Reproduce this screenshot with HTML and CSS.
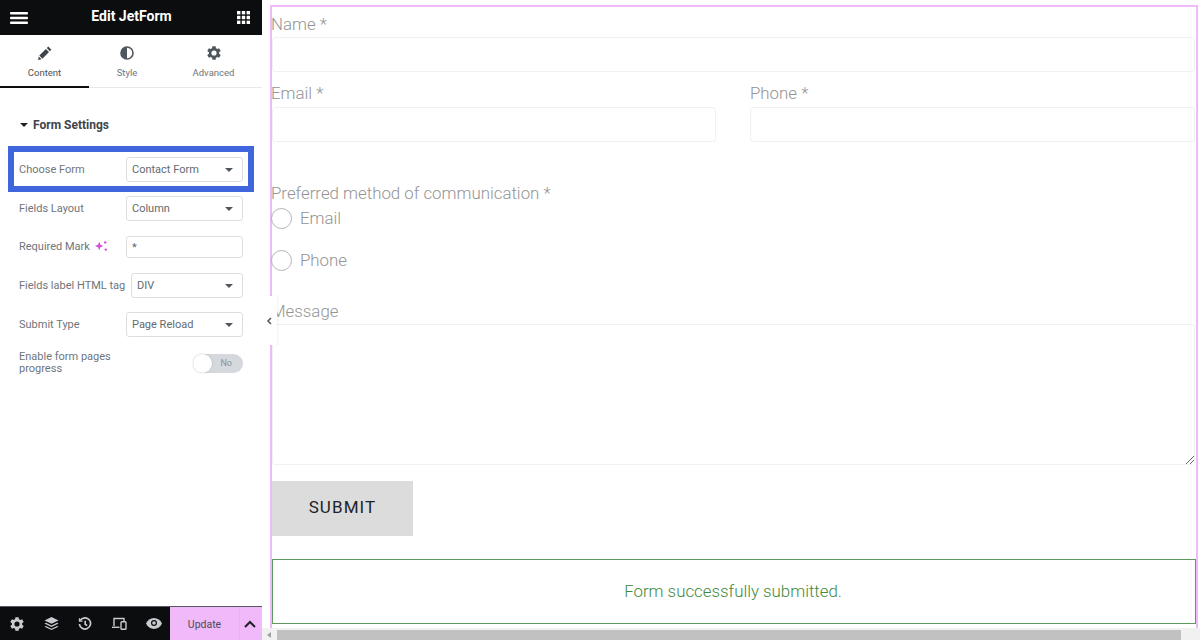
FILE: index.html
```html
<!DOCTYPE html>
<html lang="en">
<head>
    <meta charset="UTF-8" />
    <title>Edit JetForm</title>
    <link rel="stylesheet" href="styles.css">
</head>
<body>
<div class="panel">
    <div class="panel-header">
        <svg class="icon-menu" width="18" height="12" viewBox="0 0 18 12"><path d="M1 0h16a1 1 0 0 1 0 2.400H1A1 1 0 0 1 1 0zM1 4.800h16a1 1 0 0 1 0 2.400H1a1 1 0 0 1 0-2.400zM1 9.600h16a1 1 0 0 1 0 2.400H1a1 1 0 0 1 0-2.400z" fill="#fff"/></svg>
        <div class="panel-title">Edit JetForm</div>
        <svg class="icon-grid" width="13" height="13" viewBox="0 0 13 13" fill="#fff"><rect width="3.400" height="3.400"/><rect x="4.800" width="3.400" height="3.400"/><rect x="9.600" width="3.400" height="3.400"/><rect y="4.800" width="3.400" height="3.400"/><rect x="4.800" y="4.800" width="3.400" height="3.400"/><rect x="9.600" y="4.800" width="3.400" height="3.400"/><rect y="9.600" width="3.400" height="3.400"/><rect x="4.800" y="9.600" width="3.400" height="3.400"/><rect x="9.600" y="9.600" width="3.400" height="3.400"/></svg>
    </div>

    <div class="tabs">
        <div class="tab tab-content active">
            <svg width="14" height="14" viewBox="0 0 14 14"><path d="M10.300.6l3.100 3.100-1.500 1.500-3.100-3.100zM7.900 3l3.100 3.100-6.600 6.600-3.100-3.100zM.8 10.400l2.800 2.800-3.500.8z" fill="#3f444b"/></svg>
            <span>Content</span>
        </div>
        <div class="tab tab-style">
            <svg width="14" height="14" viewBox="0 0 14 14"><circle cx="7" cy="7" r="6" fill="#fff" stroke="#4f565d" stroke-width="1.600"/><path d="M7 1a6 6 0 0 0 0 12z" fill="#4f565d"/></svg>
            <span>Style</span>
        </div>
        <div class="tab tab-advanced">
            <svg width="14" height="14" viewBox="3 2.500 19 19"><path d="M19.400 13a7.600 7.600 0 0 0 0-2l2.200-1.700-2.200-3.800-2.600 1a7.500 7.500 0 0 0-1.700-1L14.700 2.800h-4.400l-.4 2.700a7.500 7.500 0 0 0-1.700 1l-2.600-1-2.200 3.800L5.600 11a7.600 7.600 0 0 0 0 2l-2.200 1.700 2.200 3.800 2.600-1a7.500 7.500 0 0 0 1.700 1l.4 2.700h4.400l.4-2.700a7.500 7.500 0 0 0 1.700-1l2.600 1 2.200-3.800zM12.500 15.500a3.500 3.500 0 1 1 0-7 3.500 3.500 0 0 1 0 7z" fill="#4f565d"/></svg>
            <span>Advanced</span>
        </div>
    </div>

    <div class="section-title"><span class="caret caret-dark"></span>Form Settings</div>

    <div class="highlight">
        <div class="row row-first">
            <label>Choose Form</label>
            <div class="select">Contact Form<span class="caret"></span></div>
        </div>
    </div>

    <div class="row row-layout">
        <label>Fields Layout</label>
        <div class="select">Column<span class="caret"></span></div>
    </div>
    <div class="row row-mark">
        <label>Required Mark
            <svg class="icon-spark" width="12" height="12" viewBox="1 1.500 10 9" fill="#d04fd6"><path d="M4.500 2.500l1 2.500 2.500 1-2.500 1-1 2.500-1-2.500-2.500-1 2.500-1z"/><circle cx="9.500" cy="3" r="1"/><circle cx="10" cy="9" r="1"/></svg>
        </label>
        <div class="select select-text">*</div>
    </div>
    <div class="row row-tag">
        <label>Fields label HTML tag</label>
        <div class="select select-wide">DIV<span class="caret"></span></div>
    </div>
    <div class="row row-submit">
        <label>Submit Type</label>
        <div class="select">Page Reload<span class="caret"></span></div>
    </div>
    <div class="row row-toggle">
        <label class="label-wrap">Enable form pages progress</label>
        <div class="toggle"><span class="knob"></span><span class="toggle-no">No</span></div>
    </div>

    <div class="panel-footer">
        <div class="footer-icons">
            <svg width="14" height="14" viewBox="3 2.500 19 19"><path d="M19.400 13a7.600 7.600 0 0 0 0-2l2.200-1.700-2.200-3.800-2.600 1a7.500 7.500 0 0 0-1.700-1L14.700 2.800h-4.400l-.4 2.700a7.500 7.500 0 0 0-1.700 1l-2.600-1-2.200 3.800L5.600 11a7.600 7.600 0 0 0 0 2l-2.200 1.700 2.200 3.800 2.600-1a7.500 7.500 0 0 0 1.700 1l.4 2.700h4.400l.4-2.700a7.500 7.500 0 0 0 1.700-1l2.600 1 2.200-3.800zM12.500 15.500a3.500 3.500 0 1 1 0-7 3.500 3.500 0 0 1 0 7z" fill="#c8ccd0"/></svg>
            <svg width="15" height="14" viewBox="0 0 15 14" fill="#c8ccd0"><path d="M7.500 0l7 3.400-7 3.400-7-3.400z"/><path d="M1.900 5.800l5.600 2.700 5.600-2.700 1.400.7-7 3.400-7-3.400z"/><path d="M1.900 9l5.600 2.700L13.100 9l1.400.7-7 3.400-7-3.400z"/></svg>
            <svg width="14" height="14" viewBox="0 0 14 14" fill="none" stroke="#c8ccd0" stroke-width="1.700"><path d="M2.200 3.500A5.600 5.600 0 1 1 1.400 7"/><path d="M1.500 1.200v3h3" stroke-width="1.300"/><path d="M7.200 3.800v3.500l2 1.300"/></svg>
            <svg width="15" height="13" viewBox="0 0 15 13" fill="none" stroke="#c8ccd0" stroke-width="1.400"><path d="M2 9V1.500h10V4"/><path d="M0 10.300h7.500"/><rect x="9" y="4.700" width="5" height="7.600" rx=".8"/></svg>
            <svg width="16" height="11" viewBox="0 0 16 11"><path d="M8 0c3.500 0 6.500 2.200 8 5.500C14.500 8.800 11.500 11 8 11S1.500 8.800 0 5.500C1.500 2.200 4.500 0 8 0z" fill="#c8ccd0"/><circle cx="8" cy="5" r="3" fill="#0c0d0e"/><circle cx="8" cy="5" r="1.800" fill="#c8ccd0"/></svg>
        </div>
        <div class="update">Update</div>
        <div class="update-more">
            <svg width="12" height="8" viewBox="0 0 12 8" fill="none" stroke="#1f2327" stroke-width="2"><path d="M1 7l5-5 5 5"/></svg>
        </div>
    </div>
</div>

<div class="collapse-handle">
    <svg width="6" height="8" viewBox="0 0 6 8" fill="none" stroke="#4f565d" stroke-width="1.500"><path d="M5 1L2 4l3 3"/></svg>
</div>

<div class="preview">
    <div class="frame">
        <div class="field-label label-name">Name *</div>
        <div class="input input-name"></div>

        <div class="two-cols">
            <div class="col col-left">
                <div class="field-label label-email">Email *</div>
                <div class="input"></div>
            </div>
            <div class="col col-right">
                <div class="field-label label-email">Phone *</div>
                <div class="input"></div>
            </div>
        </div>

        <div class="field-label label-method">Preferred method of communication *</div>
        <div class="radio"><span class="circle"></span>Email</div>
        <div class="radio radio-last"><span class="circle"></span>Phone</div>

        <div class="field-label label-message">Message</div>
        <div class="textarea">
            <svg class="resizer" width="9" height="9" viewBox="0 0 9 9" stroke="#666" stroke-width="1"><path d="M1 9l8-8M5 9l4-4"/></svg>
        </div>

        <div class="submit">SUBMIT</div>
        <div class="success">Form successfully submitted.</div>
    </div>
    <div class="scrollbar">
        <span class="arrow"></span>
        <div class="thumb"></div>
    </div>
</div>
</body>
</html>
```

FILE: styles.css
```css
/* Global Reset */
* {
    box-sizing: border-box;
    margin: 0;
    padding: 0;
}

body {
    width: 1200px;
    height: 640px;
    display: flex;
    font-family: "Roboto", "Liberation Sans", sans-serif;
    background: #fff;
    overflow: hidden;
    position: relative;
}

/* Left panel */
.panel {
    width: 262px;
    height: 640px;
    display: flex;
    flex-direction: column;
    background: #fff;
    flex-shrink: 0;
}

.panel-header {
    height: 35px;
    background: #0c0d0e;
    display: flex;
    align-items: center;
    justify-content: space-between;
    padding: 0 12px 0 10px;
    flex-shrink: 0;
}

.panel-title {
    color: #fff;
    font-size: 14px;
    font-weight: 700;
    margin: -3px 2px 0 0;
}

.tabs {
    height: 53px;
    display: flex;
    border-bottom: 1px solid #e6e8ea;
    flex-shrink: 0;
}

.tab {
    display: flex;
    flex-direction: column;
    align-items: center;
    padding-top: 11px;
    gap: 7px;
    font-size: 9.5px;
    color: #6f757b;
    height: 53px;
}

.tab-content {
    width: 89px;
}

.tab-style {
    width: 76px;
}

.tab-advanced {
    width: 97px;
}

.tab.active {
    color: #4b5258;
    border-bottom: 2px solid #0c0d0e;
}

.section-title {
    margin-top: 29px;
    margin-left: 20px;
    height: 16px;
    line-height: 16px;
    font-size: 12px;
    font-weight: 700;
    color: #3f444b;
    display: flex;
    align-items: center;
}

.caret {
    width: 0;
    height: 0;
    border-left: 4px solid transparent;
    border-right: 4px solid transparent;
    border-top: 4px solid #4f565d;
    margin-left: auto;
}

.caret-dark {
    border-top-color: #1f2327;
    margin-left: 0;
    margin-right: 5px;
}

.highlight {
    margin: 13px 8px 0;
    height: 46px;
    border: 6px solid #3f66dc;
    padding: 5px 5px 0;
}

.row {
    display: flex;
    align-items: center;
    justify-content: space-between;
    margin: 0 19px;
    font-size: 11px;
    color: #6f757b;
    height: 25px;
    flex-shrink: 0;
}

.row label {
    white-space: nowrap;
    display: flex;
    align-items: center;
    gap: 5px;
}

.row-first {
    margin: 0;
}

.row-layout {
    margin-top: 4px;
}

.row-mark {
    margin-top: 15px;
    height: 22px;
}

.row-mark label {
    margin-top: -2px;
}

.row-tag {
    margin-top: 15px;
}

.row-submit {
    margin-top: 14px;
}

.row-toggle {
    margin-top: 14px;
    height: 24px;
}

.row label.label-wrap {
    white-space: normal;
    width: 110px;
    line-height: 12px;
}

.select {
    width: 117px;
    height: 100%;
    border: 1px solid #dcdfe2;
    border-radius: 3px;
    display: flex;
    align-items: center;
    padding: 0 9px 0 5px;
    color: #636a70;
    background: #fff;
}

.select-wide {
    width: 112px;
}

.toggle {
    width: 50px;
    height: 19px;
    border-radius: 10px;
    background: #d5d8dc;
    position: relative;
    display: flex;
    align-items: center;
    justify-content: flex-end;
    padding-right: 11px;
}

.knob {
    position: absolute;
    left: 0;
    top: 0;
    width: 19px;
    height: 19px;
    border-radius: 50%;
    background: #fff;
    box-shadow: 0 0 2px rgba(0,0,0,0.2);
}

.toggle-no {
    font-size: 9px;
    color: #8b9299;
}

.panel-footer {
    margin-top: auto;
    height: 34px;
    display: flex;
    background: #0c0d0e;
    border-top: 1px solid #55595e;
}

.footer-icons {
    width: 170px;
    display: flex;
    align-items: center;
    justify-content: space-between;
    padding: 0 8px 0 10px;
}

.update {
    width: 69px;
    background: #f0b9f9;
    display: flex;
    align-items: center;
    justify-content: center;
    padding-top: 2px;
    font-size: 10.5px;
    color: #4d4a58;
}

.update-more {
    width: 23px;
    background: #f0b9f9;
    border-left: 1px solid #ebb0f3;
    display: flex;
    align-items: center;
    justify-content: center;
    padding-right: 3px;
}

/* Collapse handle over the preview */
.collapse-handle {
    position: absolute;
    left: 262px;
    top: 296px;
    width: 15px;
    height: 49px;
    background: #fff;
    box-shadow: 1px 0 2px rgba(0,0,0,0.06);
    display: flex;
    align-items: center;
    justify-content: center;
    padding-right: 2px;
    z-index: 2;
}

/* Preview */
.preview {
    flex: 1;
    display: flex;
    flex-direction: column;
    height: 640px;
    padding-left: 8px;
    padding-top: 5px;
    padding-right: 2px;
    background: #fff;
}

.frame {
    height: 623px;
    border: 2px solid #f0b9f9;
    border-bottom: none;
    padding-right: 1px;
    display: flex;
    flex-direction: column;
    flex-shrink: 0;
}

.field-label {
    font-size: 16.85px;
    font-weight: 300;
    line-height: 20px;
    color: #949494;
    margin-left: -1px;
}

.label-name {
    margin-top: 7px;
    margin-bottom: 3px;
}

.label-email {
    margin-top: 11px;
    margin-bottom: 4px;
}

.label-method {
    margin-top: 41px;
}

.label-message {
    margin-top: 26px;
    margin-bottom: 3px;
}

.input {
    height: 35px;
    border: 1px solid #f1f1f1;
    border-radius: 3px;
}

.input-name {
    height: 35px;
}

.two-cols {
    display: flex;
    gap: 34px;
}

.col {
    flex: 1;
}

.col-left {
    flex: 0 0 444px;
}

.col-right .field-label {
    margin-left: 0;
}

.radio {
    height: 30px;
    margin-bottom: 12px;
    display: flex;
    align-items: center;
    gap: 8px;
    font-size: 16.85px;
    font-weight: 300;
    color: #949494;
}

.radio-last {
    margin-bottom: 0;
}

.circle {
    width: 21px;
    height: 21px;
    margin-left: -1px;
    border: 1px solid #b4b4b4;
    border-radius: 50%;
}

.textarea {
    height: 141px;
    border: 1px solid #f1f1f1;
    border-radius: 3px;
    position: relative;
}

.resizer {
    position: absolute;
    right: 0;
    bottom: 0;
}

.submit {
    margin-top: 16px;
    width: 141px;
    height: 55px;
    padding-bottom: 4px;
    background: #dcdcdc;
    display: flex;
    align-items: center;
    justify-content: center;
    font-size: 17px;
    font-weight: 400;
    letter-spacing: 1.1px;
    color: #1f2327;
}

.success {
    margin-top: 23px;
    margin-right: -1px;
    height: 65px;
    padding: 0 2px 2px 0;
    border: 1px solid #5e9a5b;
    display: flex;
    align-items: center;
    justify-content: center;
    font-size: 16.85px;
    font-weight: 300;
    color: #3f8a3c;
}

.scrollbar {
    height: 12px;
    margin-left: -8px;
    margin-right: -2px;
    background: #f1f1f1;
    display: flex;
    align-items: flex-end;
    flex-shrink: 0;
    padding: 0 19px 0 4px;
}

.arrow {
    width: 0;
    height: 0;
    border-top: 3px solid transparent;
    border-bottom: 3px solid transparent;
    border-right: 4px solid #a0a0a0;
    margin: 0 6px 2px 1px;
}

.thumb {
    flex: 1;
    height: 10px;
    background: #c1c1c1;
}
```
